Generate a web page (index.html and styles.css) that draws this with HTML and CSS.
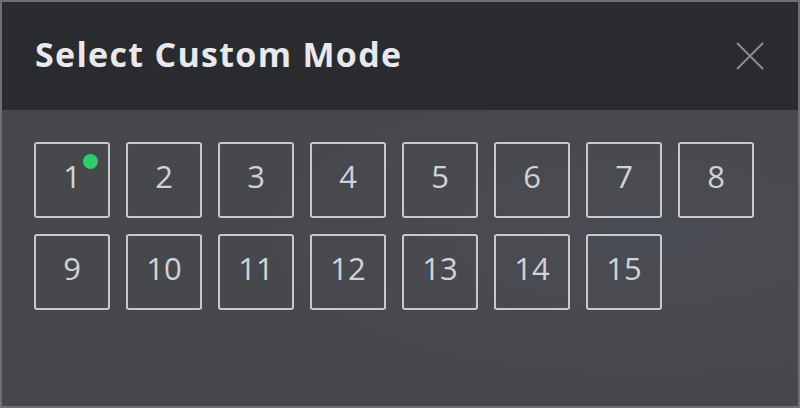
FILE: index.html
```html
<!DOCTYPE html>
<html>
<head>
<meta charset="utf-8">
<link rel="stylesheet" href="styles.css">
</head>
<body>
<div class="dialog">
  <div class="header">
    <h1 class="title">Select Custom Mode</h1>
    <button class="close" aria-label="Close">
      <svg width="28" height="28" viewBox="0 0 28 28"><path d="M1 1 L27 27 M27 1 L1 27" stroke="#8b8c90" stroke-width="2" fill="none"/></svg>
    </button>
  </div>
  <div class="content">
    <div class="grid">
      <div class="mode">1<span class="dot"></span></div>
      <div class="mode">2</div>
      <div class="mode">3</div>
      <div class="mode">4</div>
      <div class="mode">5</div>
      <div class="mode">6</div>
      <div class="mode">7</div>
      <div class="mode">8</div>
      <div class="mode">9</div>
      <div class="mode">10</div>
      <div class="mode">11</div>
      <div class="mode">12</div>
      <div class="mode">13</div>
      <div class="mode">14</div>
      <div class="mode">15</div>
    </div>
  </div>
</div>
</body>
</html>
```
FILE: styles.css
```css
html, body { margin: 0; padding: 0; }
body { width: 800px; height: 408px; overflow: hidden; background: #47484c; }
.dialog {
  box-sizing: border-box;
  width: 800px; height: 408px;
  border: 2px solid #6f7075;
  display: flex; flex-direction: column;
  background: radial-gradient(ellipse 420px 160px at 640px 230px, #4a4c53 0%, #47484c 100%);
}
.header {
  height: 108px;
  background: #2a2b2e;
  display: flex; align-items: center; justify-content: space-between;
  padding: 0 34px 0 33px;
  flex: none;
}
.title {
  margin: 0;
  font-family: "Open Sans", "Noto Sans", sans-serif;
  font-weight: 700;
  font-size: 34px;
  color: #e8e9ee;
  letter-spacing: 1.3px;
  padding-bottom: 4px;
}
.close {
  background: none; border: 0; padding: 0; margin: 0;
  width: 28px; height: 28px; display: block;
}
.close svg { display: block; }
.content { padding: 32px; }
.grid {
  display: grid;
  grid-template-columns: repeat(8, 76px);
  grid-auto-rows: 76px;
  gap: 16px;
}
.mode {
  position: relative;
  box-sizing: border-box;
  border: 2px solid #c8c9ce;
  border-radius: 3px;
  display: flex; align-items: center; justify-content: center;
  font-family: "Open Sans", sans-serif;
  font-weight: 400;
  font-size: 31px;
  color: #d1d2d7;
  padding-bottom: 8px;
}
.dot {
  position: absolute;
  width: 15px; height: 15px;
  border-radius: 50%;
  background: #2ecc6a;
  left: 47px; top: 10px;
}
```
